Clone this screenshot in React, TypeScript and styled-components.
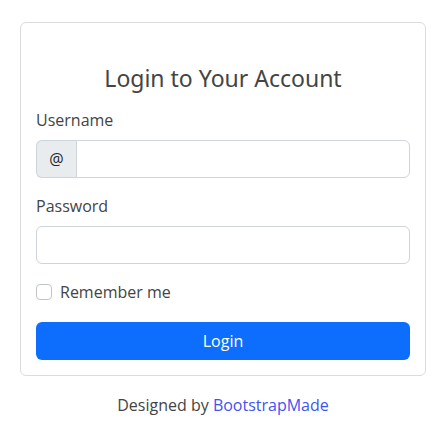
import React from 'react';
import styled, { createGlobalStyle } from 'styled-components';

// Estilos globais da página
const GlobalStyle = createGlobalStyle`
  html, body {
    margin: 0;
    padding: 0;
    background: #ffffff;
  }
  body {
    font-family: "Open Sans", "Noto Sans", sans-serif;
    color: #444444;
    font-size: 16px;
  }
  * { box-sizing: border-box; }
`;

const Page = styled.main`
  padding: 22px 22px 0 20px;
`;

const Card = styled.section`
  background: #fff;
  border: 1px solid #dcdcdc;
  border-radius: 6px;
  padding: 0 15px 15px;
`;

const Title = styled.h5`
  margin: 0;
  padding: 42px 0 17px;
  text-align: center;
  font-family: "Noto Sans", "Open Sans", sans-serif;
  font-size: 23px;
  line-height: 26px;
  font-weight: 400;
  color: #444444;
`;

const Form = styled.form`
  display: flex;
  flex-direction: column;
  gap: 16px;
`;

const Field = styled.div`
  display: flex;
  flex-direction: column;
`;

const Label = styled.label`
  line-height: 24px;
  margin-bottom: 8px;
`;

const InputGroup = styled.div`
  display: flex;
  height: 38px;
`;

const Prefix = styled.span`
  display: flex;
  align-items: center;
  justify-content: center;
  width: 40px;
  background: #e9ecef;
  border: 1px solid #ced4da;
  border-right: none;
  border-radius: 6px 0 0 6px;
  color: #212529;
`;

const Input = styled.input<{ $joined?: boolean }>`
  flex: 1 1 auto;
  min-width: 0;
  height: 38px;
  border: 1px solid #ced4da;
  border-radius: ${(p) => (p.$joined ? '0 6px 6px 0' : '6px')};
  padding: 6px 12px;
  font: inherit;
  outline: none;
`;

const CheckRow = styled.label`
  display: flex;
  align-items: center;
  gap: 8px;
  line-height: 24px;
  margin-bottom: 2px;
`;

const Checkbox = styled.span`
  width: 16px;
  height: 16px;
  border: 1px solid #bfc4c9;
  border-radius: 4px;
  background: #fff;
`;

const Button = styled.button`
  height: 38px;
  width: 100%;
  border: none;
  border-radius: 6px;
  background: #0d6efd;
  color: #fff;
  font: inherit;
  cursor: pointer;
`;

const Credits = styled.p`
  margin: 17px 0 0;
  text-align: center;
  line-height: 24px;
`;

const Link = styled.a`
  color: #4154f1;
  text-decoration: none;
`;

const App: React.FC = () => (
  <>
    <GlobalStyle />
    <Page>
      <Card>
        <Title>Login to Your Account</Title>
        <Form onSubmit={(e) => e.preventDefault()}>
          <Field>
            <Label>Username</Label>
            <InputGroup>
              <Prefix>@</Prefix>
              <Input $joined type="text" />
            </InputGroup>
          </Field>
          <Field>
            <Label>Password</Label>
            <Input type="password" />
          </Field>
          <CheckRow>
            <Checkbox />
            Remember me
          </CheckRow>
          <Button type="submit">Login</Button>
        </Form>
      </Card>
      <Credits>
        Designed by <Link href="#">BootstrapMade</Link>
      </Credits>
    </Page>
  </>
);

export default App;
